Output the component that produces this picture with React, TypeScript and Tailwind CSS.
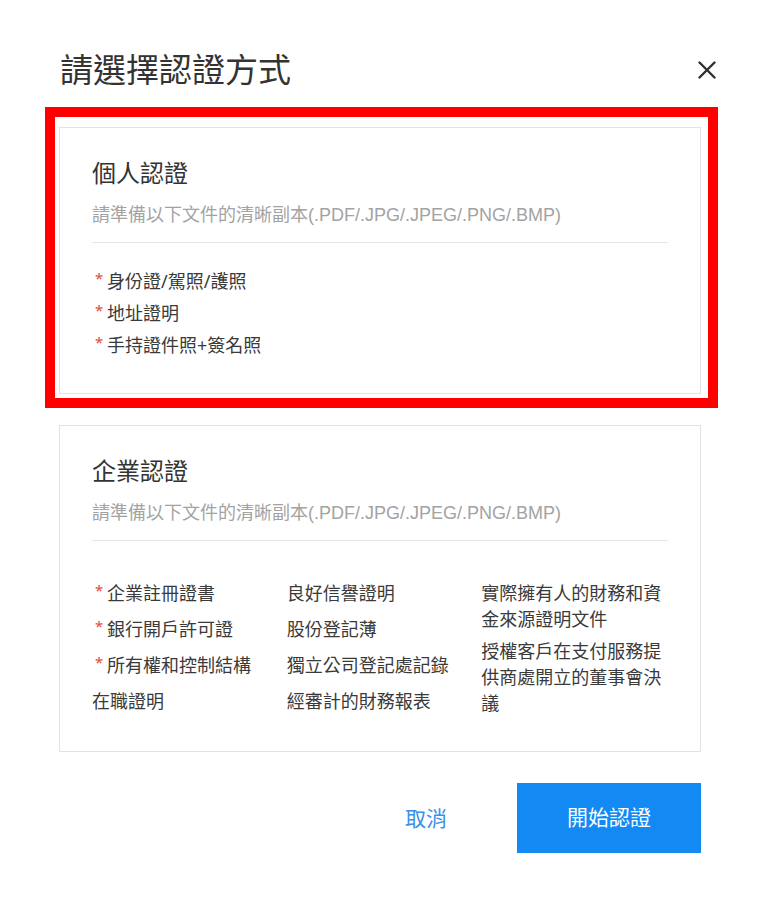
import React from "react";

type Item = { t: string; r?: boolean };

const FONT = { fontFamily: '"Noto Sans", "Noto Sans CJK TC", sans-serif' };
const SUB_FONT = { fontFamily: '"Liberation Sans", "Noto Sans CJK TC", sans-serif' };

function Req({ item }: { item: Item }) {
  return (
    <div className="flex items-start text-[18px] leading-[26px] text-[#3a3a3a]">
      {item.r && (
        <span className="w-[15px] shrink-0 pl-[3px] text-[15px] leading-[20px] text-[#e8453c]">*</span>
      )}
      <span>{item.t}</span>
    </div>
  );
}

function Card({
  title,
  children,
  gridGap,
}: {
  title: string;
  children: React.ReactNode;
  gridGap: string;
}) {
  return (
    <div className="border border-[#e2e2e2] bg-white px-[32px] pt-[29px] pb-[35px]">
      <div className="text-[24px] leading-[32px] font-normal text-[#333333]">{title}</div>
      <div className="mt-[13px] text-[18px] leading-[26px] text-[#a3a3a3]" style={SUB_FONT}>
        請準備以下文件的清晰副本(.PDF/.JPG/.JPEG/.PNG/.BMP)
      </div>
      <div className="mt-[14px] h-px bg-[#e6e6e6]" />
      <div className={gridGap}>{children}</div>
    </div>
  );
}

export default function App() {
  const personal: Item[] = [
    { t: "身份證/駕照/護照", r: true },
    { t: "地址證明", r: true },
    { t: "手持證件照+簽名照", r: true },
  ];
  const col1: Item[] = [
    { t: "企業註冊證書", r: true },
    { t: "銀行開戶許可證", r: true },
    { t: "所有權和控制結構", r: true },
    { t: "在職證明" },
  ];
  const col2: Item[] = [
    { t: "良好信譽證明" },
    { t: "股份登記薄" },
    { t: "獨立公司登記處記錄" },
    { t: "經審計的財務報表" },
  ];
  const col3: Item[] = [
    { t: "實際擁有人的財務和資金來源證明文件" },
    { t: "授權客戶在支付服務提供商處開立的董事會決議" },
  ];

  return (
    <div className="w-[760px] h-[912px] bg-white" style={FONT}>
      <div className="px-[59px] pt-[50px]">
        <div className="flex h-[40px] items-center justify-between">
          <h1 className="text-[33px] leading-[40px] font-normal text-[#333333] pl-[1px]">請選擇認證方式</h1>
          <button className="-mr-[16px] flex h-[20px] w-[20px] items-center justify-center">
            <svg width="20" height="18" viewBox="0 0 20 18" fill="none">
              <path d="M2.5 1.5 L17.5 16.5 M17.5 1.5 L2.5 16.5" stroke="#2f2f2f" strokeWidth="2.4" strokeLinecap="round" />
            </svg>
          </button>
        </div>

        <div className="relative mt-[37px]">
          <Card title="個人認證" gridGap="mt-[25px] flex flex-col gap-[6px]">
            {personal.map((it) => (
              <Req key={it.t} item={it} />
            ))}
          </Card>
          <div className="pointer-events-none absolute -left-[14px] -top-[20px] -right-[17px] -bottom-[14px] border-[10px] border-[#ff0000]" />
        </div>

        <div className="mt-[31px]">
          <Card title="企業認證" gridGap="mt-[39px] grid grid-cols-3 gap-x-[8px]">
            <div className="flex flex-col gap-[10px]">
              {col1.map((it) => (
                <Req key={it.t} item={it} />
              ))}
            </div>
            <div className="flex flex-col gap-[10px]">
              {col2.map((it) => (
                <Req key={it.t} item={it} />
              ))}
            </div>
            <div className="flex flex-col gap-[6px]">
              {col3.map((it) => (
                <Req key={it.t} item={it} />
              ))}
            </div>
          </Card>
        </div>

        <div className="mt-[31px] flex items-center justify-end gap-[70px]">
          <button className="text-[21px] leading-[30px] text-[#3b8fe6]">取消</button>
          <button className="flex h-[70px] w-[184px] items-center justify-center bg-[#1289f3] text-[21px] text-white">
            開始認證
          </button>
        </div>
      </div>
    </div>
  );
}
